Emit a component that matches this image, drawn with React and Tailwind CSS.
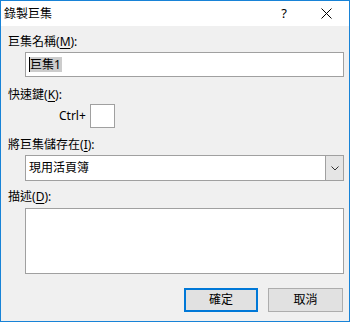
import React from "react";

const font = { fontFamily: '"Noto Sans", "Noto Sans CJK TC", sans-serif' };

function Label({ text, mnemonic, className = "" }) {
  return (
    <div className={`h-[16px] leading-[16px] text-[12px] text-black pl-[7px] ${className}`}>
      {text}(<span className="underline underline-offset-2">{mnemonic}</span>):
    </div>
  );
}

export default function App() {
  return (
    <div
      className="w-[350px] h-[322px] border border-[#1883d7] bg-[#f0f0f0] flex flex-col overflow-hidden"
      style={font}
    >
      {/* title bar */}
      <div className="h-[25px] bg-white flex items-center shrink-0">
        <span className="pl-[3px] text-[12px] leading-[16px] text-black">錄製巨集</span>
        <span className="ml-auto text-[13px] text-black leading-none mr-[34px]">?</span>
        <svg width="11" height="11" viewBox="0 0 11 11" className="mr-[17px]">
          <path d="M0.5 0.5 L10.5 10.5 M10.5 0.5 L0.5 10.5" stroke="#000" strokeWidth="1" />
        </svg>
      </div>

      <Label text="巨集名稱" mnemonic="M" className="mt-[8px]" />
      <div className="mt-[2px] ml-[24px] mr-[5px] h-[25px] bg-white border border-[#a0a0a0] flex items-center pl-[3px]">
        <span className="w-px h-[15px] bg-black" />
        <span className="bg-[#cccccc] text-[12px] leading-[15px] h-[15px] text-black pr-[1px]">巨集1</span>
      </div>

      <Label text="快速鍵" mnemonic="K" className="mt-[10px]" />
      <div className="mt-[1px] flex items-center">
        <span className="ml-[58px] text-[12px] leading-[16px] text-black w-[31px]">Ctrl+</span>
        <div className="w-[25px] h-[24px] bg-white border border-[#a0a0a0]" />
      </div>

      <Label text="將巨集儲存在" mnemonic="I" className="mt-[9px]" />
      <div className="mt-[2px] ml-[24px] mr-[5px] h-[26px] bg-white border border-[#a0a0a0] flex">
        <span className="flex-1 pl-[3px] text-[12px] leading-[24px] text-black">現用活頁簿</span>
        <div className="w-[18px] bg-[#e5e5e5] border-l border-[#a0a0a0] flex items-center justify-center">
          <svg width="8" height="5" viewBox="0 0 8 5">
            <path d="M0.5 0.5 L4 4 L7.5 0.5" stroke="#333" strokeWidth="1" fill="none" />
          </svg>
        </div>
      </div>

      <Label text="描述" mnemonic="D" className="mt-[8px]" />
      <div className="mt-[3px] ml-[24px] mr-[5px] h-[66px] bg-white border border-[#a0a0a0]" />

      <div className="mt-[14px] flex justify-end gap-[10px] mr-[6px]">
        <button className="w-[74px] h-[24px] bg-[#e1e1e1] border-2 border-[#0078d7] text-[12px] text-black leading-none">
          確定
        </button>
        <button className="w-[75px] h-[24px] bg-[#e1e1e1] border border-[#adadad] text-[12px] text-black leading-none">
          取消
        </button>
      </div>
    </div>
  );
}
